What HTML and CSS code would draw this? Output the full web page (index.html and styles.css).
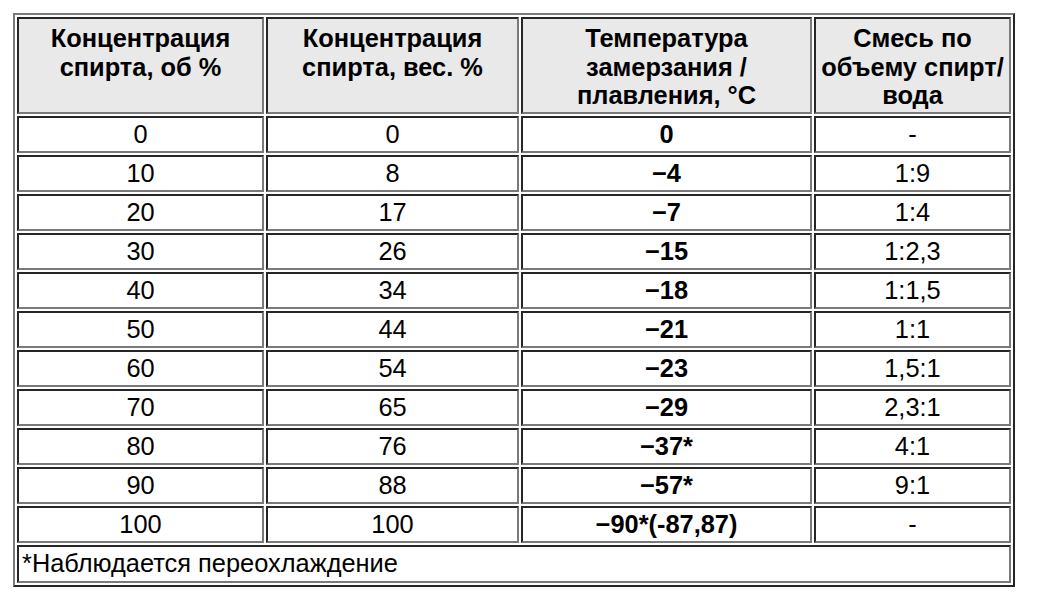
FILE: index.html
```html
<!DOCTYPE html>
<html lang="ru">
<head>
<meta charset="utf-8">
<title>Температура замерзания</title>
<link rel="stylesheet" href="styles.css">
</head>
<body>
<table class="freeze">
  <colgroup>
    <col class="c1"><col class="c2"><col class="c3"><col class="c4">
  </colgroup>
  <thead>
    <tr>
      <th>Концентрация спирта, об %</th>
      <th>Концентрация спирта, вес. %</th>
      <th>Температура замерзания / плавления, °C</th>
      <th>Смесь по объему спирт/ вода</th>
    </tr>
  </thead>
  <tbody>
    <tr><td>0</td><td>0</td><td class="b">0</td><td>-</td></tr>
    <tr><td>10</td><td>8</td><td class="b">−4</td><td>1:9</td></tr>
    <tr><td>20</td><td>17</td><td class="b">−7</td><td>1:4</td></tr>
    <tr><td>30</td><td>26</td><td class="b">−15</td><td>1:2,3</td></tr>
    <tr><td>40</td><td>34</td><td class="b">−18</td><td>1:1,5</td></tr>
    <tr><td>50</td><td>44</td><td class="b">−21</td><td>1:1</td></tr>
    <tr><td>60</td><td>54</td><td class="b">−23</td><td>1,5:1</td></tr>
    <tr><td>70</td><td>65</td><td class="b">−29</td><td>2,3:1</td></tr>
    <tr><td>80</td><td>76</td><td class="b">−37*</td><td>4:1</td></tr>
    <tr><td>90</td><td>88</td><td class="b">−57*</td><td>9:1</td></tr>
    <tr><td>100</td><td>100</td><td class="b">−90*(-87,87)</td><td>-</td></tr>
    <tr><td class="note" colspan="4">*Наблюдается переохлаждение</td></tr>
  </tbody>
</table>
</body>
</html>
```
FILE: styles.css
```css
html, body {
  margin: 0;
  background: #ffffff;
}
body {
  padding: 13px;
  font-family: "Liberation Sans", Arial, sans-serif;
  color: #000;
}
.freeze {
  table-layout: fixed;
  width: 1001px;
  border-collapse: separate;
  border-spacing: 2px;
  border-style: solid;
  border-width: 2px;
  border-color: #7a7a7a #262626 #262626 #7a7a7a;
  font-size: 25.4px;
  line-height: 28.5px;
}
.c1 { width: 247px; }
.c2 { width: 253px; }
.c3 { width: 291px; }
.c4 { width: 197px; }
.freeze th,
.freeze td {
  box-sizing: border-box;
  border-style: solid;
  border-width: 2px;
  border-color: #262626 #7a7a7a #7a7a7a #262626;
  text-align: center;
  padding: 2px 3px;
}
.freeze th {
  background: #e9e9e9;
  font-weight: bold;
  vertical-align: top;
  padding: 5px 3px 2px;
  height: 96px;
}
.freeze td {
  height: 37px;
}
.freeze td.b {
  font-weight: bold;
}
.freeze td.note {
  text-align: left;
  height: 38px;
}
```
